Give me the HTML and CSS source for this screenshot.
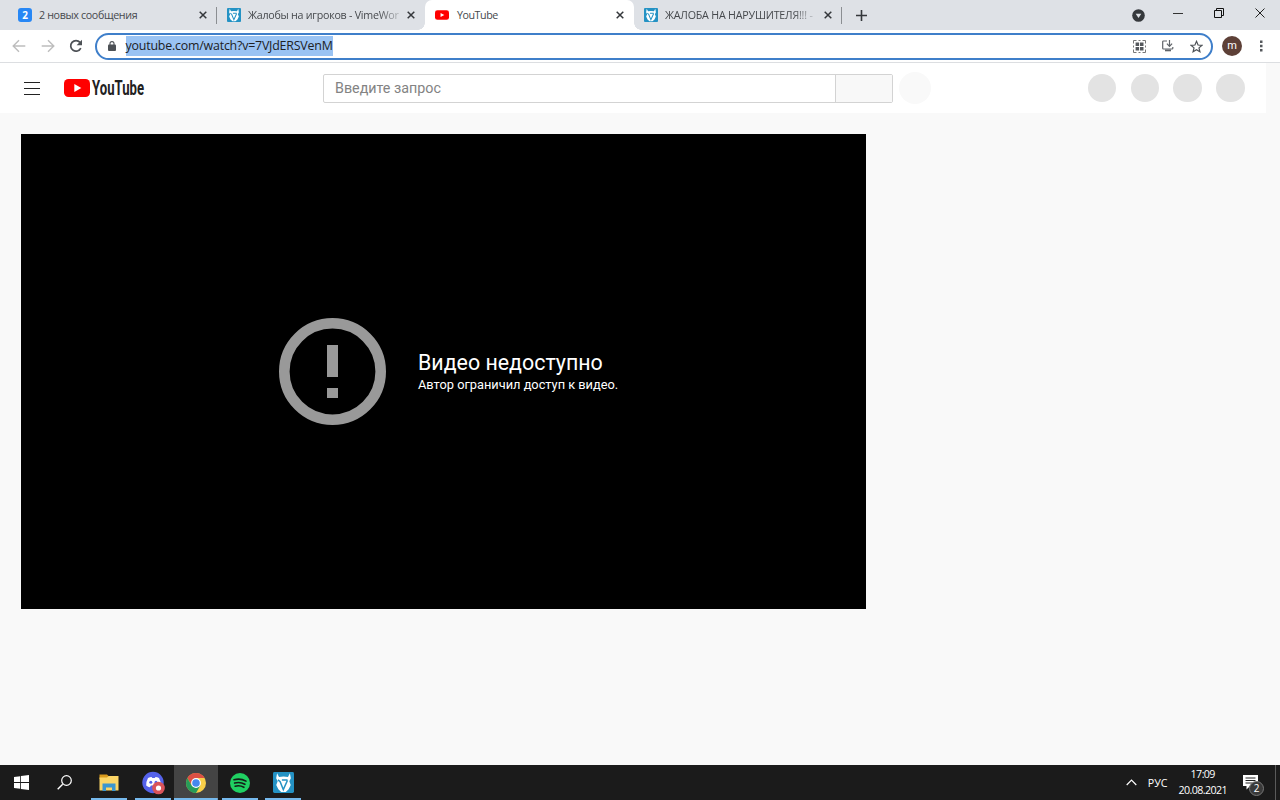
FILE: index.html
```
<!DOCTYPE html>
<html lang="ru">

<head>
    <meta charset="UTF-8">
    <meta name="viewport" content="width=device-width, initial-scale=1.0">
    <title>YouTube</title>
    <link rel="stylesheet" href="styles.css">
</head>

<body>
    <!-- shared icons -->
    <svg class="sprite" aria-hidden="true">
        <symbol id="close" viewBox="0 0 8 8">
            <path d="M.7.7l6.6 6.6M7.3.7L.7 7.3" fill="none" stroke="#34373b" stroke-width="1.5" />
        </symbol>
        <symbol id="vime" viewBox="0 0 22 22">
            <rect width="22" height="22" rx="1.5" fill="#2492c4" />
            <path d="M4.3 1.2l2 4.1q4.7-1.3 9.4 0l2-4.1 1 5.3-1.6 3.3 1.5 3.7-2.2 4.5-3 3H8.6l-3-3-2.2-4.5 1.5-3.7-1.6-3.3z" fill="#fff" />
            <path d="M5.3 8.2l2.2 2 3.3 8.3 4.400-9.800M9.300 8.400h5.900" fill="none" stroke="#2492c4" stroke-width="1.600" />
        </symbol>
        <symbol id="play" viewBox="0 0 26 18">
            <rect width="26" height="18" rx="4.5" fill="#f00" />
            <path d="M10.3 5.1l7 3.9-7 3.9z" fill="#fff" />
        </symbol>
    </svg>

    <div class="tabs">
        <div class="tab tab-first">
            <span class="badge">2</span>
            <span class="tab-title t1">2 новых сообщения</span>
            <svg class="close"><use href="#close" /></svg>
        </div>
        <div class="tab tab-second">
            <svg class="favicon"><use href="#vime" /></svg>
            <span class="tab-title t2 fade">Жалобы на игроков - VimeWor</span>
            <svg class="close"><use href="#close" /></svg>
        </div>
        <div class="tab tab-active">
            <svg class="favicon"><use href="#play" /></svg>
            <span class="tab-title t3">YouTube</span>
            <svg class="close"><use href="#close" /></svg>
        </div>
        <div class="tab tab-last">
            <svg class="favicon"><use href="#vime" /></svg>
            <span class="tab-title t4 fade">ЖАЛОБА НА НАРУШИТЕЛЯ!!! -</span>
            <svg class="close"><use href="#close" /></svg>
        </div>
        <svg class="plus" viewBox="0 0 11 11"><path d="M5.5 0v11M0 5.5h11" stroke="#34373b" stroke-width="1.6" /></svg>
        <div class="window-buttons">
            <svg width="13" height="13" viewBox="0 0 13 13">
                <circle cx="6.5" cy="6.5" r="6.3" fill="#35383c" />
                <path d="M3.7 4.8h5.6L6.5 8.9z" fill="#dee1e6" />
            </svg>
            <svg class="min" width="10" height="10" viewBox="0 0 10 10"><path d="M0 5.5h10" stroke="#333" /></svg>
            <svg class="restore" width="10" height="10" viewBox="0 0 10 10"><path d="M.5 2.5h7v7h-7zM2.5 2.5v-2h7v7h-2" fill="none" stroke="#111" /></svg>
            <svg class="win-close" width="10" height="10" viewBox="0 0 10 10"><path d="M.5.5l9 9M9.5.5l-9 9" stroke="#222" /></svg>
        </div>
    </div>

    <div class="toolbar">
        <svg class="nav-icon" viewBox="0 0 14 14"><path d="M13.3 7H1.5M7 1.2L1.2 7 7 12.8" fill="none" stroke="#bdbdbd" stroke-width="1.4" /></svg>
        <svg class="nav-icon" viewBox="0 0 14 14"><path d="M.7 7h11.8M7 1.2L12.8 7 7 12.8" fill="none" stroke="#bdbdbd" stroke-width="1.4" /></svg>
        <svg class="nav-icon" viewBox="0 0 14 14">
            <path d="M11.8 9.2A5.3 5.3 0 1 1 11 3.4" fill="none" stroke="#4d5156" stroke-width="1.7" />
            <path d="M13 .8v5.4H7.6z" fill="#4d5156" />
        </svg>
        <div class="address">
            <svg class="lock" viewBox="0 0 8 10">
                <rect y="3.6" width="8" height="6.4" rx="1" fill="#4d5156" />
                <path d="M2 4V2.6a2 2 0 0 1 4 0V4" fill="none" stroke="#4d5156" stroke-width="1.1" />
            </svg>
            <span class="url">youtube.com/watch?v=7VJdERSVenM</span>
            <div class="address-icons">
                <svg width="13" height="13" viewBox="0 0 13 13">
                    <path d="M.5 3.5v-3h3M9.5.5h3v3M12.5 9.5v3h-3M3.5 12.5h-3v-3M5.5.5h2M5.5 12.5h2M.5 5.5v2M12.5 5.5v2" fill="none" stroke="#777" />
                    <path d="M2.6 2.6h3.5v3.5H2.6zM7 2.6h3.5v3.5H7zM2.6 7h3.5v3.5H2.6zM7 7h3.5v3.5H7z" fill="#55585c" />
                </svg>
                <svg width="12" height="12" viewBox="0 0 12 12">
                    <path d="M5 1H1.5a.8.8 0 0 0-.8.8v6.4a.8.8 0 0 0 .8.8h8.5a.8.8 0 0 0 .8-.8V7" fill="none" stroke="#5f6368" stroke-width="1.2" />
                    <path d="M7.5 0v6M4.9 3.7l2.6 2.6 2.6-2.6" fill="none" stroke="#5f6368" stroke-width="1.2" />
                    <path d="M3 9.5h6v1.8H3z" fill="#5f6368" />
                </svg>
                <svg width="13" height="13" viewBox="0 0 24 24"><path d="M12 2.5l2.9 6.7 7.2.6-5.5 4.8 1.7 7.1L12 17.900l-6.300 3.800 1.700-7.100-5.500-4.800 7.200-.6z" fill="none" stroke="#4d5156" stroke-width="2.200" /></svg>
            </div>
        </div>
        <span class="avatar">m</span>
        <svg class="dots" width="3" height="12" viewBox="0 0 3 12"><path d="M0 .5h2.500V3H0zM0 4.800h2.500v2.500H0zM0 9.100h2.500v2.500H0z" fill="#55585c" /></svg>
    </div>

    <div class="page">
        <header class="masthead">
            <svg class="menu" viewBox="0 0 16 13"><path d="M0 .5h16M0 6.500h16M0 12.500h16" stroke="#222" /></svg>
            <div class="logo">
                <svg width="26" height="18"><use href="#play" /></svg>
                <svg width="56" height="32" viewBox="0 0 56 32"><text x="2" y="23" textLength="52" lengthAdjust="spacingAndGlyphs">YouTube</text></svg>
            </div>
            <div class="search">
                <div class="search-input">Введите запрос</div>
                <div class="search-button"></div>
            </div>
            <div class="mic"></div>
            <div class="circles">
                <span></span>
                <span></span>
                <span></span>
                <span></span>
            </div>
        </header>
        <main class="player">
            <svg class="warning" viewBox="0 0 107 107">
                <circle cx="53.5" cy="53.5" r="48.2" fill="none" stroke="#999" stroke-width="10.6" />
                <path d="M48 27h11v32H48zM48 70h11v10H48z" fill="#999" />
            </svg>
            <div class="message">
                <p class="message-title">Видео недоступно</p>
                <p class="message-text">Автор ограничил доступ к видео.</p>
            </div>
        </main>
    </div>

    <footer class="taskbar">
        <div class="task">
            <svg width="15" height="15" viewBox="0 0 15 15"><path d="M0 2.1l6.2-.9v5.9H0zM7 1.1L15 0v7.1H7zM0 7.9h6.2v5.9L0 12.9zM7 7.9h8V15l-8-1.1z" fill="#fff" /></svg>
        </div>
        <div class="task search-task">
            <svg width="15" height="15" viewBox="0 0 15 15"><path d="M.7 14.3l5-5" stroke="#fff" stroke-width="1.4" /><circle cx="9.5" cy="5.5" r="4.8" fill="none" stroke="#fff" stroke-width="1.2" /></svg>
        </div>
        <div class="task open">
            <svg width="20" height="18" viewBox="0 0 20 18">
                <path d="M.5.5H8l1.5 1.5V5h-9z" fill="#d99a1c" />
                <path d="M.5 3.5H8L9.500 2h10v14.500H.5z" fill="#fbd566" />
                <path d="M3.500 17V9.500h13V17H13v-3.500H7V17z" fill="#3c96cf" />
            </svg>
        </div>
        <div class="task open">
            <svg width="24" height="24" viewBox="0 0 24 24">
                <circle cx="12" cy="11.5" r="10.7" fill="#5562ea" />
                <path d="M7 7q2-.9 3.6-.9l.7 1h2.5l.7-1q1.8.1 3.5.9 2 3.4 1.9 7.6-1.8 1.4-3.7 1.7l-1-1.7H9.900l-1 1.700q-1.900-.3-3.700-1.700Q5.100 10.400 7 7z" fill="#fff" />
                <circle cx="9.800" cy="11.200" r="1.500" fill="#5562ea" />
                <circle cx="15" cy="11.200" r="1.500" fill="#5562ea" />
                <circle cx="17.500" cy="17" r="6.300" fill="#d9535a" />
                <circle cx="17.500" cy="17" r="2.600" fill="#fff" />
            </svg>
        </div>
        <div class="task open current">
            <svg width="20" height="20" viewBox="0 0 20 20">
                <circle cx="10" cy="10" r="10" fill="#f9cf48" />
                <path d="M1.340 5A10 10 0 0 1 18.660 5H10L5.670 12.500z" fill="#dc5044" />
                <path d="M1.340 5A10 10 0 0 0 10 20l4.330-7.500H5.670z" fill="#279c59" />
                <circle cx="10" cy="10" r="4.900" fill="#fff" />
                <circle cx="10" cy="10" r="3.800" fill="#4587ee" />
            </svg>
        </div>
        <div class="task open">
            <svg width="20" height="20" viewBox="0 0 20 20">
                <circle cx="10" cy="10" r="10" fill="#20d062" />
                <path d="M4 6.800q6.300-1.800 12 1.300M4.600 10.100q5.500-1.500 10.300 1.200M5.200 13.200q4.700-1.200 8.700 1.100" fill="none" stroke="#151e18" stroke-width="1.600" stroke-linecap="round" />
            </svg>
        </div>
        <div class="task open">
            <svg width="21" height="21"><use href="#vime" /></svg>
        </div>
        <div class="tray">
            <svg width="11" height="7" viewBox="0 0 11 7"><path d="M.7 6l4.800-4.800L10.300 6" fill="none" stroke="#fff" stroke-width="1.200" /></svg>
            <span class="lang">РУС</span>
            <div class="clock">
                <span class="time">17:09</span>
                <span class="date">20.08.2021</span>
            </div>
            <div class="notes">
                <svg width="15" height="15" viewBox="0 0 15 15">
                    <path d="M0 0h15v11H7l-3.500 3.500V11H0z" fill="#fff" />
                    <path d="M2.500 3h10M2.500 5.500h10M2.500 8h7" stroke="#222" />
                </svg>
                <span class="count">2</span>
            </div>
        </div>
    </footer>
</body>

</html>
```
FILE: styles.css
```
* {
    box-sizing: border-box;
}

body {
    margin: 0;
    height: 100vh;
    display: flex;
    flex-direction: column;
    overflow: hidden;
    background: #f9f9f9;
    font-family: "Open Sans", "Noto Sans", sans-serif;
}

svg {
    display: block;
    flex-shrink: 0;
}

.sprite {
    position: absolute;
    width: 0;
    height: 0;
}

/* tabs */
.tabs {
    display: flex;
    height: 30px;
    flex-shrink: 0;
    background: #dee1e6;
}

.tab {
    display: flex;
    align-items: center;
    height: 30px;
    flex-shrink: 0;
}

.tab-first {
    width: 217px;
    padding: 0 10px 0 18px;
    background: linear-gradient(#8b8e92, #8b8e92) right 7px / 1px 17px no-repeat;
}

.tab-second {
    width: 208px;
    padding: 0 10px;
}

.tab-active {
    position: relative;
    width: 209px;
    padding: 0 10px;
    background: #fff;
    border-radius: 7px 7px 0 0;
}

/* flared bottom corners of the active tab */
.tab-active::before,
.tab-active::after {
    content: "";
    position: absolute;
    bottom: 0;
    width: 7px;
    height: 7px;
}

.tab-active::before {
    left: -7px;
    background: radial-gradient(circle at 0 0, transparent 6.5px, #fff 7px);
}

.tab-active::after {
    right: -7px;
    background: radial-gradient(circle at 100% 0, transparent 6.5px, #fff 7px);
}

.tab-last {
    width: 208px;
    padding: 0 10px;
    background: linear-gradient(#8b8e92, #8b8e92) right 7px / 1px 17px no-repeat;
}

.badge {
    width: 14px;
    height: 14px;
    border-radius: 3px;
    background: #2787f5;
    color: #fff;
    font-size: 10px;
    font-weight: 700;
    line-height: 14px;
    text-align: center;
}

.favicon {
    width: 14px;
    height: 14px;
}

.tab-title {
    margin-left: 7px;
    white-space: nowrap;
    font-size: 10.7px;
    line-height: 18px;
    color: #46494d;
}

.t1 {
    letter-spacing: -0.35px;
}

.t2 {
    letter-spacing: -0.25px;
}

.t3 {
    margin-left: 8px;
    letter-spacing: -0.45px;
}

.t4 {
    letter-spacing: -0.2px;
}

.fade {
    -webkit-mask-image: linear-gradient(to right, #000 86%, rgba(0, 0, 0, .25));
    mask-image: linear-gradient(to right, #000 86%, rgba(0, 0, 0, .25));
}

.close {
    width: 8px;
    height: 8px;
    margin-left: auto;
}

.plus {
    width: 11px;
    height: 11px;
    margin: 10px 0 0 14px;
}

.window-buttons {
    display: flex;
    margin-left: auto;
    padding: 9px 15px 0 0;
}

.min {
    margin-left: 28px;
    margin-top: -1px;
}

.restore {
    margin-left: 31px;
    margin-top: -1px;
}

.win-close {
    margin-left: 31px;
    margin-top: -1px;
}

/* address bar */
.toolbar {
    display: flex;
    align-items: center;
    height: 33px;
    flex-shrink: 0;
    padding: 0 17px 0 12px;
    background: #fff;
    border-bottom: 1px solid #dcdee1;
}

.nav-icon {
    width: 14px;
    height: 14px;
    margin-right: 14.5px;
}

.nav-icon + .address {
    margin-left: -3px;
}

.address {
    display: flex;
    align-items: center;
    flex: 1;
    height: 27px;
    padding: 0 8px 0 11px;
    border: 2px solid #3f7fca;
    border-radius: 14px;
}

.lock {
    width: 8px;
    height: 10px;
}

.url {
    height: 20px;
    margin-left: 10px;
    background: #9ac3f3;
    color: #202124;
    font-size: 12.4px;
    line-height: 20px;
    letter-spacing: -0.2px;
    white-space: nowrap;
}

.address-icons {
    display: flex;
    align-items: center;
    gap: 16px;
    margin-left: auto;
}

.avatar {
    width: 20px;
    height: 20px;
    margin-left: 9px;
    border-radius: 50%;
    background: #5d4037;
    color: #fff;
    font: 11px/19px Roboto, sans-serif;
    text-align: center;
}

.dots {
    margin-left: 18px;
}

/* youtube */
.page {
    flex: 1;
    font-family: Roboto, Arial, sans-serif;
}

.masthead {
    display: flex;
    align-items: center;
    width: 1266px;
    height: 50px;
    padding: 0 21.5px 0 24px;
    background: #fff;
}

.menu {
    width: 16px;
    height: 13px;
}

.logo {
    display: flex;
    align-items: center;
    width: 82px;
    margin-left: 24px;
}

.logo text {
    font-family: "Liberation Sans Narrow", Roboto, sans-serif;
    font-size: 20px;
    font-weight: 700;
    fill: #212121;
}

.search {
    display: flex;
    width: 570px;
    height: 29px;
    margin-left: 177px;
    border: 1px solid #d3d3d3;
    border-radius: 2px;
}

.search-input {
    width: 512px;
    padding-left: 11px;
    border-right: 1px solid #d3d3d3;
    color: #838383;
    font-size: 14.3px;
    line-height: 26px;
}

.search-button {
    flex: 1;
    background: #f8f8f8;
}

.mic {
    width: 32px;
    height: 32px;
    margin-left: 6px;
    border-radius: 50%;
    background: #f9f9f9;
}

.circles {
    display: flex;
    gap: 14.3px;
    margin-left: auto;
}

.circles span {
    width: 28.4px;
    height: 28.4px;
    border-radius: 50%;
    background: #e3e3e3;
}

.player {
    display: flex;
    align-items: center;
    width: 845px;
    height: 475px;
    margin: 21px 0 0 21px;
    padding-left: 258px;
    background: #000;
    color: #fff;
}

.warning {
    width: 107px;
    height: 107px;
}

.message {
    margin-left: 32px;
    padding-bottom: 1px;
}

.message p {
    margin: 0;
    white-space: nowrap;
}

.message-title {
    font-size: 21.4px;
    line-height: 26px;
}

.message-text {
    font-size: 12.8px;
    line-height: 17px;
}

/* taskbar */
.taskbar {
    display: flex;
    height: 35px;
    flex-shrink: 0;
    background: #1b1b1b;
    color: #fff;
}

.task {
    display: flex;
    align-items: center;
    justify-content: center;
    width: 43.6px;
}

.search-task {
    padding-right: 2px;
}

.open {
    background: linear-gradient(#76b9ed, #76b9ed) center bottom / 36px 2px no-repeat;
}

.current {
    background: linear-gradient(#76b9ed, #76b9ed) center bottom / 100% 2px no-repeat #444;
}

.tray {
    display: flex;
    align-items: center;
    margin-left: auto;
    padding-right: 15px;
    background: linear-gradient(#5a5a5a, #5a5a5a) right 4px top / 1px 100% no-repeat;
    font-size: 10.7px;
}

.lang {
    margin-left: 11px;
}

.clock {
    display: flex;
    flex-direction: column;
    align-items: center;
    margin-left: 11px;
    line-height: 16px;
    letter-spacing: -0.6px;
}

.clock .time {
    margin-top: -1px;
}

.notes {
    position: relative;
    margin-left: 16px;
    padding-right: 7px;
}

.count {
    position: absolute;
    left: 6px;
    top: 6px;
    width: 15px;
    height: 15px;
    border: 1px solid #777;
    border-radius: 50%;
    background: #3a3a3a;
    font-size: 10px;
    line-height: 13px;
    text-align: center;
}
```
